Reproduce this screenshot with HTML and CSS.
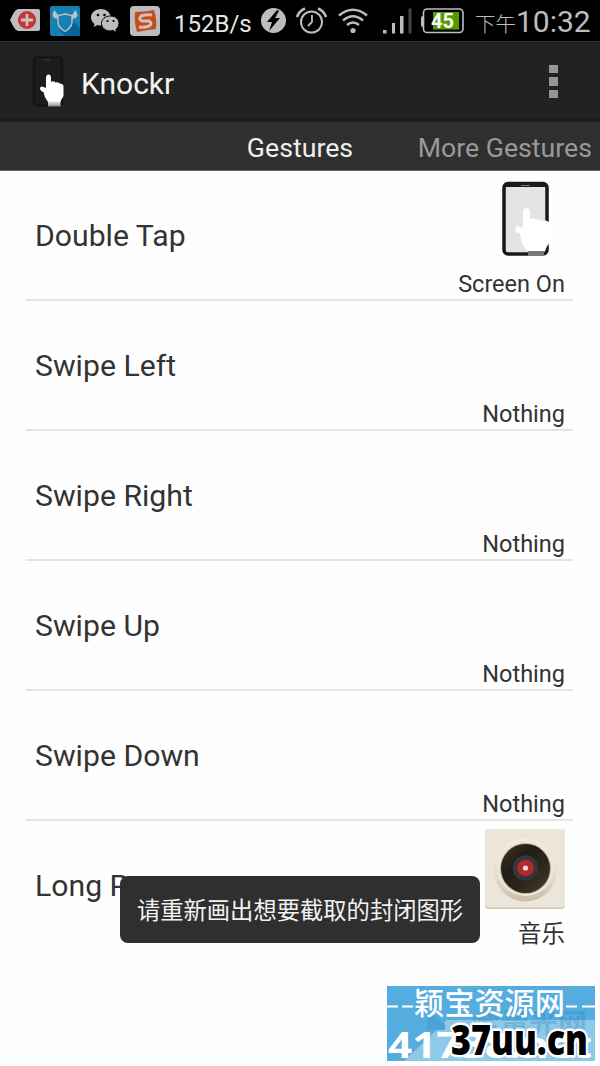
FILE: index.html
```
<!DOCTYPE html>
<html lang="en">
<head>
    <meta charset="UTF-8">
    <meta name="viewport" content="width=device-width, initial-scale=1.0">
    <title>Knockr</title>
    <link rel="stylesheet" href="styles.css">
</head>
<body>
    <div class="screen">
        <!-- Status bar -->
        <div class="status-bar">
            <div class="notifications">
                <svg width="30" height="23" viewBox="0 0 30 23">
                    <path d="M8 0H28Q30 0 30 2V20Q30 22 28 22H8Q5 22 0 11Q5 0 8 0Z" fill="#bdbdbd"/>
                    <circle cx="17" cy="11" r="9" fill="#c83238"/>
                    <path d="M17 5V17M11 11H23" stroke="#c8c4c4" stroke-width="2.8"/>
                </svg>
                <svg width="30" height="30" viewBox="0 0 30 30">
                    <rect width="30" height="30" rx="2" fill="#1680b3"/>
                    <path d="M22 14L30 22V30H15L9 23Z" fill="#086496"/>
                    <path d="M15 8L22 9.500V17Q21 22 15 25.500Q9 22 8 17V9.500Z" fill="#1680b3" stroke="#b7c1c6" stroke-width="1.4"/>
                    <path d="M8 9L4.500 4Q1 9 4 12L8 13ZM22 9L25.500 4Q29 9 26 12L22 13Z" fill="#b7c1c6"/>
                </svg>
                <svg class="wechat" width="29" height="25" viewBox="0 0 29 25">
                    <path d="M10 1C4 1 0 5 0 9.5Q0 13 3.5 16L2.5 19L6.5 17Q10 18 12 17L20 9C19 4 15 1 10 1Z" fill="#bdbdbd"/>
                    <path d="M19.5 8C14 8 10.5 11.5 10.5 15.5S14 23 19.5 23L22 22.5L25.5 24.5L25 21.5Q28 19 28 15.5C28 11.5 25 8 19.5 8Z" fill="#bdbdbd" stroke="#000"/>
                    <circle cx="7" cy="7" r="1.3"/><circle cx="13.5" cy="7" r="1.3"/>
                    <circle cx="16.5" cy="13" r="1.1"/><circle cx="22.5" cy="13" r="1.1"/>
                </svg>
                <svg width="30" height="30" viewBox="0 0 30 30">
                    <rect width="30" height="30" rx="4" fill="#bdbdbd"/>
                    <path d="M5 6Q15 6 24 4Q27 13 26 23Q16 24 7 26Q4 16 5 6Z" fill="#c94a1b"/>
                    <path d="M22 9Q16 8 11 10Q8 13 12 15L19 15Q23 18 19 20Q14 22 9 21" fill="none" stroke="#c9c3bf" stroke-width="3"/>
                </svg>
            </div>
            <span class="speed">152B/s</span>
            <div class="indicators">
                <svg width="25" height="25" viewBox="0 0 25 25">
                    <circle cx="12.5" cy="12.5" r="12.5" fill="#bdbdbd"/>
                    <path d="M16 2L6 14H11L8 23L19 10H14L18 3Z"/>
                </svg>
                <svg class="alarm" width="31" height="27" viewBox="0 0 31 27" fill="none" stroke="#bdbdbd" stroke-width="2">
                    <circle cx="15.5" cy="15" r="10.5"/>
                    <path d="M16 8V15L12 19" stroke-width="1.8"/>
                    <path d="M1 10Q3 4 9 1.5M30 10Q28 4 22 1.5" stroke-width="2.6"/>
                </svg>
                <svg class="wifi" width="30" height="26" viewBox="0 0 30 26" fill="none" stroke="#bdbdbd" stroke-width="2.5">
                    <path d="M1 7.5Q15 -4 29 7.5M5 12.5Q15 4 25 12.5M9 17Q15 12 21 17"/>
                    <circle cx="15" cy="22.5" r="2.6" fill="#bdbdbd" stroke="none"/>
                </svg>
                <svg class="signal" width="29" height="26" viewBox="0 0 29 26" fill="#bdbdbd">
                    <path d="M0 22H3.5V25.5H0ZM9 15H12V25.5H9ZM17 8H20.5V25.5H17Z"/>
                    <path d="M25.500 0.500H28.500V25.500H25.500Z" fill="#444"/>
                </svg>
                <svg class="battery" width="43" height="26" viewBox="0 0 43 26">
                    <rect x="2.500" y="1" width="39.500" height="23.500" rx="3.500" fill="none" stroke="#bdbdbd" stroke-width="1.600"/>
                    <path d="M3 8H2Q0 8 0 10V17Q0 19 2 19H3Z" fill="#bdbdbd"/>
                    <rect x="12" y="4" width="26" height="17.500" fill="#549b03"/>
                    <text x="10" y="19.500" class="battery-level">45</text>
                </svg>
            </div>
            <div class="clock"><span class="period">下午</span>10:32</div>
        </div>

        <!-- Action bar -->
        <div class="action-bar">
            <svg class="app-icon" width="34" height="52" viewBox="0 0 34 52">
                <defs>
                    <linearGradient id="cuff" x1="0" y1="0" x2="0" y2="1">
                        <stop offset="0.820" stop-color="#fff"/>
                        <stop offset="1" stop-color="#888"/>
                    </linearGradient>
                </defs>
                <rect x="2" y="1.500" width="28" height="48" rx="3" fill="#1d1d1d" stroke="#151515" stroke-width="2.500"/>
                <path d="M12 3.500H18" stroke="#333" stroke-width="1.500"/>
                <path d="M14 22Q14 18.500 16.500 18.500Q19 18.500 19 22V26Q21 24.500 23.500 26.500Q26 25.500 27.500 27.500Q31 27 31.500 30V40Q29 44 28.500 46V50.500H16V46Q12 41 11.500 36Q8 35 8 32Q9 29.500 11.500 31L14 32Z" fill="url(#cuff)"/>
            </svg>
            <h1 class="app-title">Knockr</h1>
            <div class="overflow-menu"><i></i><i></i><i></i></div>
        </div>

        <!-- Tabs -->
        <div class="tabs">
            <span class="tab active">Gestures</span>
            <span class="tab next">More Gestures</span>
        </div>

        <!-- Gesture list -->
        <div class="gesture-list">
            <div class="gesture">
                <span class="name">Double Tap</span>
                <div class="action">
                    <svg class="phone-icon" width="50" height="76" viewBox="0 0 50 76">
                        <rect x="2" y="2.500" width="43" height="70.500" rx="4" fill="#e4e4e4" stroke="#191919" stroke-width="3.500"/>
                        <path d="M4 5H43" stroke="#191919" stroke-width="2"/>
                        <path d="M19 4.500H28" stroke="#777"/>
                        <path d="M26 70H42V75H26Z" fill="#777"/>
                        <path d="M21 31Q21 27 24.500 27Q28 27 28 31V38Q32 36 35 39Q38 37 40 40Q44 38 48 42V61Q44 66 43 70H26Q19 66 18 52Q13 52 13 48Q14 44 18 46L21 47Z" fill="#fff"/>
                    </svg>
                    <span class="value">Screen On</span>
                </div>
            </div>
            <div class="gesture">
                <span class="name">Swipe Left</span>
                <div class="action"><span class="value">Nothing</span></div>
            </div>
            <div class="gesture">
                <span class="name">Swipe Right</span>
                <div class="action"><span class="value">Nothing</span></div>
            </div>
            <div class="gesture">
                <span class="name">Swipe Up</span>
                <div class="action"><span class="value">Nothing</span></div>
            </div>
            <div class="gesture">
                <span class="name">Swipe Down</span>
                <div class="action"><span class="value">Nothing</span></div>
            </div>
            <div class="gesture">
                <span class="name">Long Press</span>
                <div class="action">
                    <svg class="music-icon" width="80" height="80" viewBox="0 0 80 80">
                        <defs>
                            <linearGradient id="rim" x1="0" y1="0" x2="0" y2="1">
                                <stop offset="0" stop-color="#f2ede3"/>
                                <stop offset="0.600" stop-color="#e6dfd0"/>
                                <stop offset="1" stop-color="#c9bda8"/>
                            </linearGradient>
                            <linearGradient id="vinyl" x1="0" y1="0" x2="1" y2="1">
                                <stop offset="0" stop-color="#3d3526"/>
                                <stop offset="0.350" stop-color="#211d17"/>
                                <stop offset="0.600" stop-color="#2a251c"/>
                                <stop offset="1" stop-color="#463d2c"/>
                            </linearGradient>
                        </defs>
                        <rect width="80" height="80" rx="4" fill="#cfc3ae"/>
                        <rect width="80" height="78.500" rx="4" fill="#ece6da"/>
                        <circle cx="40.500" cy="41" r="31.500" fill="url(#rim)"/>
                        <circle cx="40.500" cy="39" r="28" fill="#eee8dc"/>
                        <circle cx="40.500" cy="39.500" r="25.500" fill="#bcae97"/>
                        <circle cx="40.500" cy="39.500" r="24.500" fill="url(#vinyl)"/>
                        <circle cx="40.500" cy="39" r="12.800" fill="#37343a"/>
                        <circle cx="40.500" cy="39" r="8.300" fill="#b4292f"/>
                        <circle cx="40.500" cy="39" r="2.600" fill="#e5dcda"/>
                    </svg>
                    <span class="value">音乐</span>
                </div>
            </div>
        </div>

        <div class="toast">请重新画出想要截取的封闭图形</div>

        <!-- Site badge -->
        <svg class="site-badge" width="210" height="78" viewBox="0 0 210 78">
            <rect width="208" height="75" fill="#54acdf"/>
            <path d="M60 34H208V75H17Z" fill="#8fc8e9"/>
            <path d="M40 24L58 38V44H40Z" fill="#4ba2d4"/>
            <text x="84" y="49" textLength="116" class="badge-shade">金量光网</text>
            <path d="M0 20.500H11M15 20.500H26M179 20.500H190M195 20.500H208" stroke="#fff" stroke-width="2"/>
            <text x="27" y="28" textLength="151" lengthAdjust="spacingAndGlyphs" class="badge-name">颖宝资源网</text>
            <text x="1" y="72" textLength="204" lengthAdjust="spacingAndGlyphs" class="badge-number">41738.net</text>
            <text x="64" y="69" textLength="137" lengthAdjust="spacingAndGlyphs" class="badge-url">37uu.cn</text>
        </svg>
    </div>
</body>
</html>
```
FILE: styles.css
```
* {
    margin: 0;
    padding: 0;
    box-sizing: border-box;
}

body {
    font-family: Roboto, 'Noto Sans CJK SC', sans-serif;
    background-color: #fefefe;
    color: #333;
}

.screen {
    position: relative;
    width: 600px;
    height: 1066px;
    overflow: hidden;
}

svg {
    display: block;
    flex-shrink: 0;
}

/* Status bar */
.status-bar {
    display: flex;
    align-items: center;
    height: 41px;
    padding-left: 10px;
    background-color: #000;
    color: #bdbdbd;
    white-space: nowrap;
}

.notifications {
    display: flex;
    align-items: center;
    gap: 10px;
    width: 164px;
}

.wechat {
    margin: 0 0 0 1px;
}

.speed {
    width: 87px;
    padding-top: 6px;
    font-size: 24px;
    color: #e6e6e6;
}

.indicators {
    display: flex;
    align-items: center;
}

.alarm {
    margin-left: 10px;
}

.wifi {
    margin-left: 11px;
}

.signal {
    margin-left: 15px;
}

.battery {
    margin-left: 9px;
}

.battery-level {
    font-size: 20px;
    font-weight: 700;
    fill: #fff;
}

.clock {
    display: flex;
    align-items: baseline;
    margin-left: 11px;
    padding-top: 2px;
    font-size: 30px;
}

.period {
    width: 41px;
    font-size: 20.5px;
    font-weight: 300;
}

/* Action bar */
.action-bar {
    display: flex;
    align-items: center;
    height: 81px;
    padding: 0 42px 0 32px;
    background-color: #222;
    border-top: 1px solid #303030;
    border-bottom: 3px solid #1b1b1b;
}

.app-icon {
    margin-top: 3px;
}

.app-title {
    margin-left: 15px;
    padding-top: 5px;
    font-size: 30px;
    font-weight: 400;
    color: #f3f3f3;
}

.overflow-menu {
    display: flex;
    flex-direction: column;
    gap: 4px;
    margin-left: auto;
    padding-top: 2px;
}

.overflow-menu i {
    width: 9px;
    height: 8.5px;
    background-color: #969696;
}

/* Tabs */
.tabs {
    display: grid;
    grid-template-columns: 1fr auto 1fr;
    align-items: center;
    height: 49px;
    padding: 3px 8px 0;
    background-color: #2f2f2f;
    border-bottom: 1px solid #666;
    font-size: 26.7px;
}

.tab {
    white-space: nowrap;
}

.active {
    grid-column: 2;
    color: #eee;
}

.next {
    justify-self: end;
    color: #999;
}

/* Gesture list */
.gesture-list {
    padding: 0 27px 0 26px;
}

.gesture {
    display: flex;
    justify-content: space-between;
    align-items: center;
    height: 130px;
    padding: 0 8px 0 9px;
    border-bottom: 2px solid #e4e4e4;
}

.gesture:last-child {
    border-bottom-color: transparent;
}

.name {
    padding-top: 1px;
    font-size: 30.2px;
}

.action {
    display: flex;
    flex-direction: column;
    align-items: flex-end;
    justify-content: space-between;
    height: 100%;
    padding-top: 10px;
}

.value {
    height: 30px;
    margin-top: auto;
    font-size: 23.5px;
    line-height: 31px;
}

.phone-icon {
    margin-right: 13px;
}

.music-icon {
    margin-top: -2px;
}

/* Toast lies over the list */
.toast {
    position: absolute;
    left: 120px;
    top: 876px;
    width: 360px;
    height: 67px;
    border-radius: 8px;
    background-color: #2f2f2f;
    color: #f2f2f2;
    font-size: 23.3px;
    line-height: 70px;
    text-align: center;
    white-space: nowrap;
}

/* Badge in the corner */
.site-badge {
    position: absolute;
    left: 387px;
    top: 986px;
}

.badge-name {
    font-family: 'Liberation Serif', 'Noto Sans CJK SC', serif;
    font-size: 30px;
    font-weight: 500;
    fill: #fff;
}

.badge-shade {
    font-size: 29px;
    font-weight: 700;
    fill: #3387b5;
    opacity: 0.3;
}

.badge-number {
    font-family: 'Open Sans', sans-serif;
    font-size: 35px;
    font-weight: 700;
    fill: #fff;
}

.badge-url {
    font-family: 'Open Sans', sans-serif;
    font-size: 42px;
    font-weight: 800;
    fill: #000;
    stroke: #fff;
    stroke-width: 5px;
    stroke-linejoin: round;
    paint-order: stroke;
}
```
